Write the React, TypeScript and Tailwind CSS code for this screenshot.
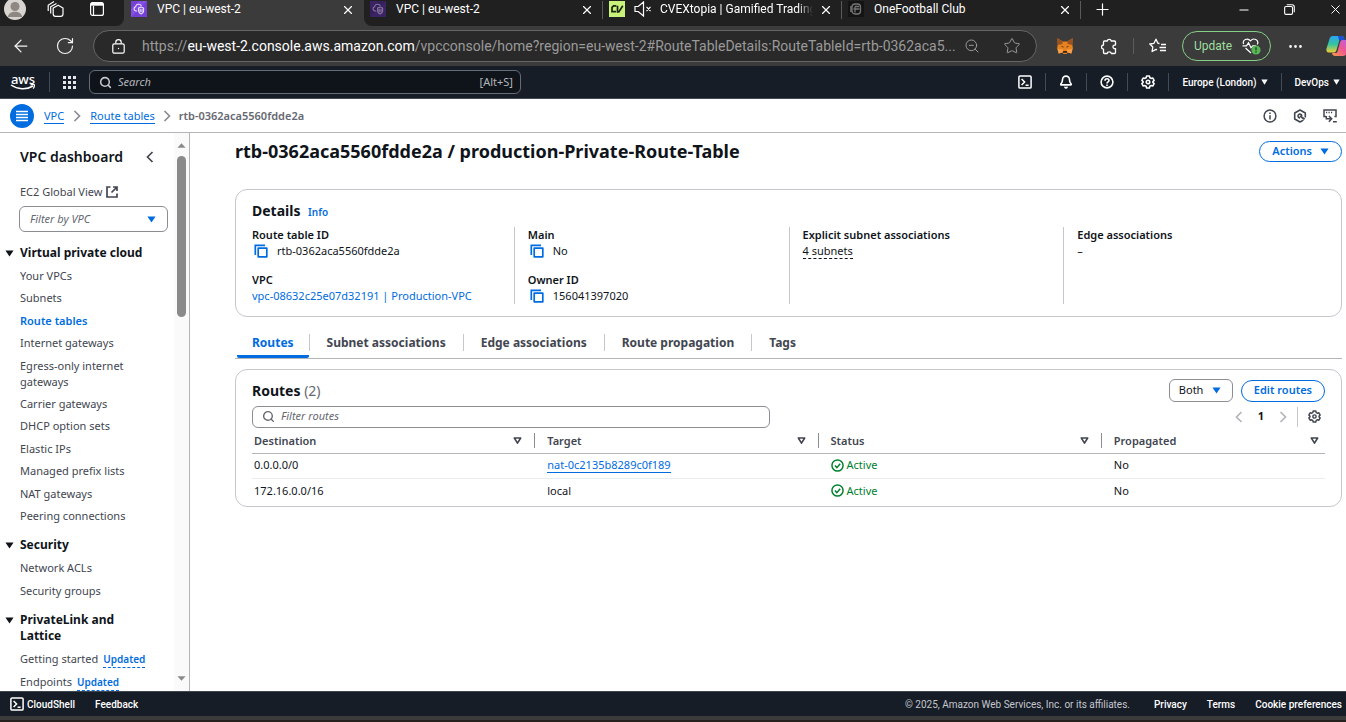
import React from "react";
import {
  ArrowLeft,
  Bell,
  Ellipsis,
  Minus,
  Plus,
  RotateCw,
  Search,
  Star,
  X,
  ZoomOut,
} from "lucide-react";

const chromeFont = "font-[Roboto,'Open_Sans',sans-serif]";
const pageFont = "font-['Noto_Sans','Open_Sans',sans-serif]";

/* ---------- icons ---------- */

function Caret({ className = "" }: { className?: string }) {
  return (
    <svg viewBox="0 0 10 8" preserveAspectRatio="none" className={className} aria-hidden="true">
      <path d="M0.5 0.5h9L5 7.5z" fill="currentColor" />
    </svg>
  );
}

function SortIcon() {
  return (
    <svg viewBox="0 0 9 8" className="h-2 w-[9px]" aria-hidden="true">
      <path d="M1.3 1h6.4L4.5 6.2z" fill="none" stroke="currentColor" strokeWidth="1.6" strokeLinejoin="round" />
    </svg>
  );
}

function Chevron({ className = "", left = false }: { className?: string; left?: boolean }) {
  return (
    <svg viewBox="0 0 8 12" className={className} aria-hidden="true">
      <path d={left ? "M6.5 1L1.5 6l5 5" : "M1.5 1l5 5-5 5"} fill="none" stroke="currentColor" strokeWidth="1.7" />
    </svg>
  );
}

function CopyIcon() {
  return (
    <svg viewBox="0 0 14 14" className="h-[14px] w-[14px]" fill="none" stroke="currentColor" strokeWidth="1.7" aria-hidden="true">
      <path d="M1.3 11V1.3H11" />
      <rect x="4.2" y="4.2" width="8.6" height="8.6" strokeLinejoin="round" />
    </svg>
  );
}

function GearIcon({ className = "" }: { className?: string }) {
  return (
    <svg viewBox="0 0 16 16" className={className} fill="none" stroke="currentColor" strokeWidth="1.8" strokeLinejoin="round" aria-hidden="true">
      <path d="M6.4 1.2h3.2l.5 1.9 1.4.8 1.9-.5L15 6.2 13.600 7.500v1L15 9.800l-1.600 2.800-1.900-.5-1.400.8-.5 1.900H6.400l-.5-1.900-1.400-.8-1.900.5L1 9.800l1.400-1.300v-1L1 6.200l1.600-2.800 1.900.5 1.400-.8z" />
      <circle cx="8" cy="8" r="2" />
    </svg>
  );
}

function ShellIcon() {
  return (
    <svg viewBox="0 0 14 14" className="h-[14px] w-[14px]" fill="none" stroke="currentColor" strokeWidth="1.5" aria-hidden="true">
      <rect x="0.9" y="0.9" width="12.2" height="12.2" rx="1.2" />
      <path d="M3.6 4l3 3-3 3M7.6 10.3h3" />
    </svg>
  );
}

function HelpIcon() {
  return (
    <svg viewBox="0 0 14 14" className="h-[14px] w-[14px]" fill="none" stroke="currentColor" strokeWidth="1.6" aria-hidden="true">
      <circle cx="7" cy="7" r="5.9" />
      <path d="M5 5.7c0-2.6 4-2.4 4-.2C9 7 7 6.8 7 8.5M7 9.6v1.4" />
    </svg>
  );
}

function InfoIcon() {
  return (
    <svg viewBox="0 0 14 14" className="h-[14px] w-[14px]" fill="none" stroke="currentColor" strokeWidth="1.5" aria-hidden="true">
      <circle cx="7" cy="7" r="5.9" />
      <path d="M7 6.2v4.2M7 3.6v1.5" />
    </svg>
  );
}

function HexIcon() {
  return (
    <svg viewBox="0 0 14 14" className="h-[14px] w-[14px]" fill="none" stroke="currentColor" strokeWidth="1.600" strokeLinejoin="round" aria-hidden="true">
      <path d="M12.300 8.600V4L7 1 1.700 4v6L7 13l3.400-1.900" />
      <path d="M8.800 7A1.900 1.900 0 107 8.900" />
      <path d="M7 7l4.600 3.200" strokeWidth="2" />
    </svg>
  );
}

function ScreenIcon() {
  return (
    <svg viewBox="0 0 14 14" className="h-[14px] w-[14px]" fill="none" stroke="currentColor" strokeWidth="1.500" aria-hidden="true">
      <path d="M3 7.600H1V1h12v6.600h-1.600" />
      <path d="M3 3.400h1.200M5.500 3.400h1.200M8 3.400h1.200" />
      <path d="M3.300 7v2.800h4.500M5.900 6.900l2.800 2.900-2.800 2.900M10 12.800h3.800" />
    </svg>
  );
}

function CheckCircle() {
  return (
    <svg viewBox="0 0 14 14" className="h-[13px] w-[13px]" fill="none" stroke="currentColor" strokeWidth="1.6" aria-hidden="true">
      <circle cx="7" cy="7" r="6" />
      <path d="M4.2 7.1l2.1 2.2 3.6-4.2" />
    </svg>
  );
}

function VpcIcon({ dim = false }: { dim?: boolean }) {
  return (
    <svg viewBox="0 0 16 16" className="h-4 w-4 shrink-0" aria-hidden="true">
      <rect width="16" height="16" fill={dim ? "#3b2466" : "#7440d6"} />
      <path d="M0 16L16 0H8L0 8z" fill={dim ? "#35205c" : "#8450e4"} />
      <g fill="none" stroke={dim ? "#8a7a9c" : "#efe4ff"} strokeWidth="1.100">
        <path d="M6.200 10H5A2.200 2.200 0 014.600 5.700 3.100 3.100 0 0110.400 5" />
        <path d="M7.600 7l2.500-1 2.500 1v3c0 1.600-1.300 2.500-2.500 3-1.200-.5-2.500-1.400-2.500-3zM9.200 7.800v3.400M11 7.800v3.400" />
      </g>
    </svg>
  );
}

function AwsLogo() {
  return (
    <span className="flex w-[26px] flex-col items-center" aria-label="AWS">
      <span className="text-[13px] leading-[10px] font-medium text-white">aws</span>
      <svg viewBox="0 0 26 6" className="h-[6px] w-[26px]" fill="none" stroke="#fff" strokeWidth="1.500" aria-hidden="true">
        <path d="M1 1c6.500 4.500 15.500 5 22 1" />
        <path d="M20.500 .8c1.500-.3 3-.3 3.900 0 .2 1-.3 2.700-1.200 3.900" strokeWidth="1.200" />
      </svg>
    </span>
  );
}

function FoxIcon() {
  return (
    <svg viewBox="0 0 16 16" className="h-4 w-4" aria-hidden="true">
      <path d="M0.500 0.300L5.800 3.500h4.400L15.500 .3 15.300 6.500l.6 4-1.500 5-3.800-1L9.500 15.900h-3L5.400 14.500l-3.800 1L.1 10.500l.6-4z" fill="#e8821e" />
      <path d="M.5.3L5.800 3.500 5.300 6 .9 7zM15.500.3l-5.300 3.200.5 2.500 4.400 1z" fill="#9a5220" />
      <path d="M1.600 15.500l3.800-1 .8-3L.8 11zM14.400 15.500l-3.800-1-.8-3 5.400-.5z" fill="#f6a04a" />
      <path d="M3.800 8l2.400.4.300 1.400zM12.200 8l-2.400.4-.3 1.400zM6.200 13h3.600l.3 1.800H5.900z" fill="#33231b" />
    </svg>
  );
}

function CopilotIcon() {
  return (
    <svg viewBox="0 0 24 22" className="h-[22px] w-6 shrink-0" aria-hidden="true">
      <defs>
        <linearGradient id="cpA" x1="0" y1="0" x2="0" y2="1">
          <stop offset="0" stopColor="#2aa4f0" />
          <stop offset="0.500" stopColor="#35c4a0" />
          <stop offset="1" stopColor="#f2cf32" />
        </linearGradient>
        <linearGradient id="cpB" x1="1" y1="0" x2="0" y2="1">
          <stop offset="0" stopColor="#b161f5" />
          <stop offset="0.500" stopColor="#f0568f" />
          <stop offset="1" stopColor="#fb9a4a" />
        </linearGradient>
      </defs>
      <path d="M6.500 1h9c2 0 2.500 1 3 3l-5 1-3 10c-.5 2-1.500 2.500-3 2.500H3c-2.500 0-3-2-2.500-4L3.500 4C4 2 5 1 6.500 1z" fill="url(#cpA)" />
      <path d="M12 1h3.500c2 0 2.500 1 3.200 4H13z" fill="#1b4fd6" />
      <path d="M17.500 21H9c-1.500 0-2.500-.7-3-3h3.500c1 0 1.700-.5 2-1.500L14 7.500C14.500 5.500 15.500 5 17 5h4c2.500 0 3 2 2.500 4L20.500 18c-.5 2-1.500 3-3 3z" fill="url(#cpB)" />
    </svg>
  );
}

/* ---------- browser chrome ---------- */

function TabClose({ label }: { label: string }) {
  return (
    <button aria-label={label} className="mt-[2px] block shrink-0 text-white">
      <X size={14} strokeWidth={2} />
    </button>
  );
}

function TabStrip() {
  return (
    <div className="shrink-0 bg-[#3b3b3b]">
      <div className={`flex h-[26px] text-[12px] leading-[17px] text-white ${chromeFont}`}>
        <div className="flex w-[124px] shrink-0 items-start rounded-br-lg bg-[#202020] pl-1">
          <button aria-label="Profile" className="-mt-[2px] h-[22px] w-[22px] overflow-hidden rounded-full bg-[#d8d4d0]">
            <svg viewBox="0 0 22 22" className="h-[22px] w-[22px]" aria-hidden="true">
              <circle cx="11" cy="8.500" r="4.500" fill="#8e8782" />
              <path d="M4 19c0-7 14-7 14 0z" fill="#8e8782" />
            </svg>
          </button>
          <button aria-label="Workspaces" className="ml-[21px]">
            <svg viewBox="0 0 17 17" className="h-[17px] w-[17px]" fill="none" stroke="#fff" strokeWidth="1.200" strokeLinejoin="round" aria-hidden="true">
              <path d="M6.200 8l5-2.800L16 8v6c0 1.500-.8 2.300-2.300 2.300H8.500c-1.500 0-2.300-.8-2.300-2.300zM3.700 13.500V6.800L9.500 3.400M1.200 11V5.200L7 1.600" />
            </svg>
          </button>
          <button aria-label="Tab actions" className="mt-[2px] ml-[26px]">
            <svg viewBox="0 0 14 14" className="h-[14px] w-[14px]" fill="none" stroke="#fff" strokeWidth="1.200" aria-hidden="true">
              <rect x="0.600" y="0.600" width="12.800" height="12.800" rx="2" />
              <path d="M1 2.200h12" strokeWidth="3" />
              <path d="M3.500 4v9" />
            </svg>
          </button>
        </div>
        <div className="flex w-[240px] shrink-0 items-start pt-px pr-[9px] pl-[7px]">
          <VpcIcon />
          <span className="ml-[10px] flex-1">VPC | eu-west-2</span>
          <TabClose label="Close VPC tab" />
        </div>
        <div className="flex min-w-0 flex-1 rounded-bl-lg bg-[#202020]">
          <div className="flex w-[238px] shrink-0 items-start pt-px pr-[8px] pl-[6px]">
            <VpcIcon dim />
            <span className="ml-[10px] flex-1">VPC | eu-west-2</span>
            <TabClose label="Close second VPC tab" />
          </div>
          <div className="flex w-[239px] shrink-0 items-start pt-px pr-[8px]">
            <span className="h-[18px] w-px shrink-0 bg-[#5a5a5a]" />
            <svg viewBox="0 0 16 16" className="ml-[6px] h-4 w-4 shrink-0" aria-hidden="true">
              <rect width="16" height="16" fill="#c9f27b" />
              <path d="M7.300 4.800H4.600L3 6.300v4.400h4M8.500 4.800v6.100h1.300l4-6.100" fill="none" stroke="#1c2410" strokeWidth="1.700" />
            </svg>
            <svg viewBox="0 0 18 16" className="ml-[9px] h-4 w-[18px] shrink-0" fill="none" stroke="#fff" strokeWidth="1.200" aria-hidden="true">
              <path d="M1 5.500h3.200L9.500 1v14l-5.300-4.500H1zM12.500 5.800l4 4.400M16.500 5.800l-4 4.400" />
            </svg>
            <span className="ml-[8px] min-w-0 flex-1 whitespace-nowrap [mask-image:linear-gradient(to_right,#000_90%,transparent)]">
              CVEXtopia | Gamified Trading
            </span>
            <div className="ml-[6px]"><TabClose label="Close CVEXtopia tab" /></div>
          </div>
          <div className="flex w-[239px] shrink-0 items-start pt-px pr-[8px]">
            <span className="h-[18px] w-px shrink-0 bg-[#5a5a5a]" />
            <svg viewBox="0 0 16 16" className="ml-[6px] h-4 w-4 shrink-0" aria-hidden="true">
              <rect width="16" height="16" fill="#141414" />
              <g fill="none" stroke="#757575" strokeWidth="1.300">
                <rect x="4" y="3" width="8.500" height="10" rx="3" />
                <path d="M5.500 8h6M7 5.500h4M7 5.500v6M2 6h2M2 8h2M2 10h2" />
              </g>
            </svg>
            <span className="ml-[10px] flex-1">OneFootball Club</span>
            <TabClose label="Close OneFootball tab" />
          </div>
          <div className="flex flex-1 items-start pt-px pr-[3px]">
            <span className="h-[18px] w-px shrink-0 bg-[#5a5a5a]" />
            <button aria-label="New tab" className="-mt-px ml-[12px]"><Plus size={19} strokeWidth={1.500} /></button>
            <div className="mt-px ml-auto flex items-center gap-[33px]">
              <button aria-label="Minimize"><Minus size={14} strokeWidth={2} /></button>
              <button aria-label="Restore">
                <svg viewBox="0 0 12 12" className="h-[11px] w-[11px]" fill="none" stroke="#fff" strokeWidth="1.200" aria-hidden="true">
                  <rect x="0.700" y="2.700" width="8.600" height="8.600" rx="1.500" />
                  <path d="M3 .8h5.800c1.300 0 2.400 1.100 2.400 2.400V9" />
                </svg>
              </button>
              <button aria-label="Close window"><X size={15} strokeWidth={1.600} /></button>
            </div>
          </div>
        </div>
      </div>
    </div>
  );
}

function AddressBar() {
  return (
    <div className={`flex h-10 shrink-0 items-center overflow-hidden bg-[#3b3b3b] text-gray-100 ${chromeFont}`}>
      <button aria-label="Back" className="ml-[11px]"><ArrowLeft size={20} strokeWidth={1.500} /></button>
      <button aria-label="Reload" className="ml-[24px]"><RotateCw size={20} strokeWidth={1.400} /></button>
      <div className="ml-[18px] flex h-8 min-w-0 flex-1 items-center rounded-full border border-[#666] bg-[#292929] pr-[15px] pl-[18px]">
        <svg viewBox="0 0 13 15" className="h-[15px] w-[13px] shrink-0" fill="none" stroke="#fff" strokeWidth="1.200" aria-hidden="true">
          <rect x="0.800" y="4.800" width="11.400" height="9.400" rx="1.500" />
          <path d="M3.800 4.500V3.300a2.700 2.700 0 015.400 0v1.200" />
          <circle cx="6.500" cy="9.500" r="0.700" fill="#fff" stroke="none" />
        </svg>
        <p className="ml-[17px] min-w-0 flex-1 text-[14px] whitespace-nowrap text-[#9a9a9a]">
          https://<span className="text-white">eu-west-2.console.aws.amazon.com</span>
          /vpcconsole/home?region=eu-west-2#RouteTableDetails:RouteTableId=rtb-0362aca5...
        </p>
        <button aria-label="Zoom out" className="ml-[4px] text-[#9a9a9a]"><ZoomOut size={16} strokeWidth={1.500} /></button>
        <button aria-label="Add to favorites" className="ml-[23px] text-[#9a9a9a]"><Star size={18} strokeWidth={1.300} /></button>
      </div>
      <button aria-label="Wallet" className="ml-[20px]"><FoxIcon /></button>
      <button aria-label="Extensions" className="ml-[28px]">
        <svg viewBox="0 0 17 17" className="h-[17px] w-[17px]" fill="none" stroke="#fff" strokeWidth="1.300" strokeLinejoin="round" aria-hidden="true">
          <path d="M3.500 3h2.700a2.100 2.100 0 014.100 0h3.200c.6 0 1 .4 1 1v3c-3.400-.4-3.400 4.100 0 3.700V14.500c0 .6-.4 1-1 1h-3.200c-.2-2.300-3.900-2.300-4.100 0H3.500c-.6 0-1-.4-1-1v-3.400C-.2 11 -.2 7.100 2.500 7V4c0-.6.4-1 1-1z" />
        </svg>
      </button>
      <span className="ml-[15px] h-4 w-px bg-[#5c5c5c]" />
      <button aria-label="Favorites" className="ml-[15px]">
        <svg viewBox="0 0 18 16" className="h-4 w-[18px]" fill="none" stroke="#fff" strokeWidth="1.300" strokeLinejoin="round" aria-hidden="true">
          <path d="M10.500 5.500L8.900 5.300 7 1.200 5 5.300l-4.200.7L3.800 9l-.7 4.500L7 11.400l1 .5M12 6.500h5M10.500 9.500H17M11 12.500h6" />
        </svg>
      </button>
      <button className="ml-[15px] flex h-[30px] w-[89px] items-center justify-between rounded-full border border-[#86cf86] pr-[9px] pl-[11px] text-[12px] text-[#9fdf9f]">
        Update
        <svg viewBox="0 0 19 17" className="h-[17px] w-[19px]" fill="none" aria-hidden="true">
          <path d="M1.600 6C0 1.800 5.500-.8 8.500 2.800 11.500-.8 17.500 1.800 15.300 6.500M3.500 10l5.500 5" stroke="#fff" strokeWidth="1.200" />
          <path d="M.5 7.800h4l2-3 2.500 5 1.800-2H14" stroke="#fff" strokeWidth="1.200" />
          <circle cx="14" cy="12" r="4.600" fill="#58b558" />
          <path d="M14 9.300v3M14 13.300v1.200" stroke="#173d17" strokeWidth="1.300" />
        </svg>
      </button>
      <button aria-label="Settings and more" className="ml-[16px]"><Ellipsis size={17} /></button>
      <button aria-label="Copilot" className="-mr-[4px] ml-[22px]"><CopilotIcon /></button>
    </div>
  );
}

/* ---------- console header ---------- */

const NavRule = () => <span className="h-[18px] w-px bg-[#424a57]" />;

function ConsoleNav() {
  return (
    <header className="flex h-[33px] shrink-0 items-center border-b border-[#424650] bg-[#161d27] text-[#e4e6ea]">
      <a href="#home" className="ml-[10px]"><AwsLogo /></a>
      <span className="ml-[13px] h-5 w-px bg-[#424a57]" />
      <button aria-label="Services" className="ml-[13px]">
        <svg viewBox="0 0 13 13" className="h-[13px] w-[13px]" fill="currentColor" aria-hidden="true">
          {[0, 5, 10].map((y) => [0, 5, 10].map((x) => <rect key={`${x}-${y}`} x={x} y={y} width="3" height="3" />))}
        </svg>
      </button>
      <label className="ml-[13px] flex h-6 w-[432px] items-center rounded-md border border-[#656c78] bg-[#0f141a] pr-[7px] pl-[9px]">
        <Search size={13} strokeWidth={2.800} className="shrink-0 text-[#c6c6cd]" />
        <input aria-label="Search" placeholder="Search" className="ml-[6px] min-w-0 flex-1 bg-transparent text-[11px] outline-none placeholder:text-[#b4b4bb] placeholder:italic" />
        <span className="text-[11px] text-[#b4b4bb]">[Alt+S]</span>
      </label>
      <div className={`mr-[6px] ml-auto flex items-center gap-[13px] text-[10px] text-white ${chromeFont}`}>
        <button aria-label="CloudShell"><ShellIcon /></button>
        <NavRule />
        <button aria-label="Notifications"><Bell size={14} strokeWidth={2.800} /></button>
        <NavRule />
        <button aria-label="Help"><HelpIcon /></button>
        <NavRule />
        <button aria-label="Settings"><GearIcon className="h-[14px] w-[14px]" /></button>
        <NavRule />
        <button className="flex items-center gap-[4px] font-medium">Europe (London)<Caret className="h-[6px] w-[7px]" /></button>
        <NavRule />
        <button className="flex items-center gap-[4px] font-medium">DevOps<Caret className="h-[6px] w-[7px]" /></button>
      </div>
    </header>
  );
}

function Breadcrumbs() {
  return (
    <div className="flex h-[34px] shrink-0 items-center border-b border-[#b4b4bb] bg-white pl-[10px] text-[11px] leading-[15px]">
      <button aria-label="Toggle navigation" className="flex h-6 w-6 items-center justify-center rounded-full bg-[#006ce0]">
        <svg viewBox="0 0 12 12" className="h-3 w-3" stroke="#fff" strokeWidth="1.500" aria-hidden="true">
          <path d="M0 1.500h12M0 4.500h12M0 7.500h12M0 10.500h12" />
        </svg>
      </button>
      <nav aria-label="Breadcrumb" className="flex items-center text-[#006ce0]">
        <a href="#vpc" className="ml-[10px] border-b border-[#006ce0]">VPC</a>
        <Chevron className="mx-[9px] h-[12px] w-[8px] text-[#8c8c94]" />
        <a href="#route-tables" className="border-b border-[#006ce0]">Route tables</a>
        <Chevron className="mx-[8px] h-[12px] w-[8px] text-[#8c8c94]" />
        <span className="font-semibold text-[#656871]">rtb-0362aca5560fdde2a</span>
      </nav>
      <div className="mr-[9px] ml-auto flex gap-4 text-[#424650]">
        <button aria-label="Info"><InfoIcon /></button>
        <button aria-label="Diagnostics"><HexIcon /></button>
        <button aria-label="Open panel"><ScreenIcon /></button>
      </div>
    </div>
  );
}

/* ---------- side navigation ---------- */

type NavItem = { label: string; active?: boolean; updated?: boolean };

const vpcItems: NavItem[] = [
  { label: "Your VPCs" },
  { label: "Subnets" },
  { label: "Route tables", active: true },
  { label: "Internet gateways" },
  { label: "Egress-only internet gateways" },
  { label: "Carrier gateways" },
  { label: "DHCP option sets" },
  { label: "Elastic IPs" },
  { label: "Managed prefix lists" },
  { label: "NAT gateways" },
  { label: "Peering connections" },
];

function NavSection({ title, items, listClass }: { title: string; items: NavItem[]; listClass: string }) {
  return (
    <section className="mb-[13px] w-[150px]">
      <h3 className="text-[12px] leading-4 font-bold text-[#0f141a]">
        <button className="flex items-start text-left">
          <Caret className="mt-[5px] mr-[6px] ml-[5px] h-[7px] w-[9px] shrink-0" />
          <span>{title}</span>
        </button>
      </h3>
      <ul className={`mt-[7px] ml-5 flex flex-col ${listClass}`}>
        {items.map((item) => (
          <li key={item.label} className={item.updated ? "leading-4 whitespace-nowrap" : "leading-4"}>
            <a href="#nav" className={item.active ? "font-semibold text-[#006ce0]" : "text-[#424650]"}>{item.label}</a>
            {item.updated && (
              <a href="#updated" className="ml-[5px] border-b border-dashed border-[#006ce0] pb-px text-[10px] font-semibold text-[#006ce0]">
                Updated
              </a>
            )}
          </li>
        ))}
      </ul>
    </section>
  );
}

function Sidebar() {
  return (
    <aside className="flex w-[190px] shrink-0 overflow-hidden border-r border-[#b4b4bb] text-[11px]">
      <div className="min-w-0 flex-1">
        <div className="mt-[15px] mr-5 ml-5 flex items-center justify-between">
          <h2 className="text-[14px] leading-[18px] font-semibold whitespace-nowrap text-[#0f141a]">VPC dashboard</h2>
          <button aria-label="Collapse navigation" className="text-[#424650]"><Chevron left className="h-[12px] w-[8px]" /></button>
        </div>
        <a href="#ec2" className="mt-[18px] ml-5 flex items-center gap-[4px] leading-4 text-[#424650]">
          EC2 Global View
          <svg viewBox="0 0 12 12" className="h-3 w-3" fill="none" stroke="currentColor" strokeWidth="1.700" aria-hidden="true">
            <path d="M4.500 1H1v10h10V7.500M7 1h4v4M11 1L5.500 6.500" />
          </svg>
        </a>
        <label className="relative mt-[6px] ml-[19px] block w-[149px]">
          <select aria-label="Filter by VPC" className="block h-[26px] w-full appearance-none rounded-md border border-[#8c8c94] bg-white pl-[10px] text-[11px] text-[#656871] italic">
            <option>Filter by VPC</option>
          </select>
          <Caret className="pointer-events-none absolute top-[10px] right-[12px] h-[7px] w-[9px] text-[#006ce0]" />
        </label>
        <nav aria-label="VPC" className="mt-[13px]">
          <NavSection title="Virtual private cloud" items={vpcItems} listClass="h-64 justify-between" />
          <NavSection title="Security" items={[{ label: "Network ACLs" }, { label: "Security groups" }]} listClass="gap-[7px]" />
          <NavSection
            title="PrivateLink and Lattice"
            items={[{ label: "Getting started", updated: true }, { label: "Endpoints", updated: true }]}
            listClass="gap-[7px]"
          />
        </nav>
      </div>
      <div className="flex w-[15px] flex-col items-center bg-[#fafafa] py-[10px]" aria-hidden="true">
        <Caret className="h-[5px] w-[9px] shrink-0 rotate-180 text-[#8a8a8a]" />
        <span className="mt-[8px] h-[161px] w-[9px] rounded-full bg-[#8a8a8a]" />
        <Caret className="mt-auto h-[5px] w-[9px] shrink-0 text-[#8a8a8a]" />
      </div>
    </aside>
  );
}

/* ---------- details ---------- */

function Field({ label, copy = false, children }: { label: string; copy?: boolean; children: React.ReactNode }) {
  return (
    <div>
      <dt className="font-semibold">{label}</dt>
      <dd className="flex items-center">
        {copy && (
          <button aria-label={`Copy ${label}`} className="mr-[9px] ml-[2px] text-[#006ce0]"><CopyIcon /></button>
        )}
        {children}
      </dd>
    </div>
  );
}

const detailCol = "flex flex-col gap-[13px]";
const ruledCol = "-ml-[13px] border-l border-[#c6c6cd] pl-[13px]";

function DetailsCard() {
  return (
    <section className="mt-[27px] rounded-xl border border-[#c6c6cd] px-4 pt-[12px] pb-[12px]">
      <h2 className="h-[18px] text-[14px] leading-[18px] font-bold">
        Details <a href="#info" className="ml-[4px] text-[10px] font-semibold text-[#006ce0]">Info</a>
      </h2>
      <dl className="mt-[7px] grid grid-cols-4 gap-x-[26px] leading-4">
        <div className={detailCol}>
          <Field label="Route table ID" copy>rtb-0362aca5560fdde2a</Field>
          <Field label="VPC"><a href="#vpc" className="text-[#006ce0]">vpc-08632c25e07d32191 | Production-VPC</a></Field>
        </div>
        <div className={`${detailCol} ${ruledCol}`}>
          <Field label="Main" copy>No</Field>
          <Field label="Owner ID" copy>156041397020</Field>
        </div>
        <div className={`${detailCol} ${ruledCol}`}>
          <Field label="Explicit subnet associations"><a href="#subnets" className="border-b border-dashed border-[#0f141a] leading-[15px]">4 subnets</a></Field>
        </div>
        <div className={`${detailCol} ${ruledCol}`}>
          <Field label="Edge associations">–</Field>
        </div>
      </dl>
    </section>
  );
}

/* ---------- tabs and routes ---------- */

const tabs = ["Routes", "Subnet associations", "Edge associations", "Route propagation", "Tags"];

function Tabs() {
  return (
    <div role="tablist" className="mt-[11px] flex h-[31px] border-b border-[#b4b4bb] pl-[2px] text-[12px] leading-4 font-bold text-[#424650]">
      {tabs.map((tab, i) => (
        <div key={tab} className="flex">
          <button
            role="tab"
            aria-selected={i === 0}
            className={i === 0 ? "rounded-b-xs border-b-3 border-[#006ce0] pt-[2px] pr-[15px] pl-[15px] text-[#006ce0]" : "border-b-3 border-transparent px-[17px] pt-[2px]"}
          >
            {tab}
          </button>
          {i < tabs.length - 1 && <span className="mt-[6px] h-[17px] w-px bg-[#c6c6cd]" />}
        </div>
      ))}
    </div>
  );
}

const routes = [
  { destination: "0.0.0.0/0", target: "nat-0c2135b8289c0f189", link: true },
  { destination: "172.16.0.0/16", target: "local", link: false },
];

function RoutesTable() {
  const heads = ["Destination", "Target", "Status", "Propagated"];
  return (
    <table className="w-full table-fixed border-collapse text-left">
      <colgroup>
        <col className="w-[26.4%]" />
        <col className="w-[26.4%]" />
        <col className="w-[26.4%]" />
        <col />
      </colgroup>
      <thead>
        <tr className="h-[25px] border-b border-[#b4b4bb] text-[#424650]">
          {heads.map((head, i) => (
            <th key={head} scope="col" className="p-0 pt-px font-semibold">
              <div className={`flex h-[15px] items-center justify-between ${i === 0 ? "pl-[2px]" : "pl-[12px]"} ${i < 3 ? "border-r border-[#8c8c94] pr-[12px]" : "pr-[6px]"}`}>
                {head}
                <button aria-label={`Sort by ${head}`}><SortIcon /></button>
              </div>
            </th>
          ))}
        </tr>
      </thead>
      <tbody>
        {routes.map((route) => (
          <tr key={route.destination} className="h-[25px] border-b border-[#ebebf0] last:border-0">
            <td className="p-0 pl-[2px]">{route.destination}</td>
            <td className="p-0 pl-[12px]">
              {route.link ? <a href="#nat" className="inline-block border-b border-[#006ce0] leading-[15px] text-[#006ce0]">{route.target}</a> : route.target}
            </td>
            <td className="p-0 pl-[12px]">
              <span className="flex items-center gap-[3px] text-[#00802f]"><CheckCircle />Active</span>
            </td>
            <td className="p-0 pl-[12px]">No</td>
          </tr>
        ))}
      </tbody>
    </table>
  );
}

function RoutesCard() {
  return (
    <section className="mt-[10px] rounded-xl border border-[#c6c6cd] px-4 pt-[9px] pb-[3px]">
      <div className="flex h-[23px] items-center">
        <h2 className="text-[14px] leading-[18px] font-bold">Routes <span className="font-normal text-[#656871]">(2)</span></h2>
        <label className="relative ml-auto">
          <select aria-label="Route type" className="block h-[23px] w-16 appearance-none rounded-md border border-[#8c8c94] bg-white pl-[9px] text-[11px]">
            <option>Both</option>
          </select>
          <Caret className="pointer-events-none absolute top-[8px] right-[12px] h-[7px] w-[9px] text-[#006ce0]" />
        </label>
        <button className="ml-[8px] h-[22px] rounded-full border border-[#006ce0] px-[12px] font-semibold text-[#006ce0]">Edit routes</button>
      </div>
      <div className="mt-[3px] flex h-[23px] items-center">
        <label className="flex h-[22px] w-[518px] items-center rounded-md border border-[#8c8c94] px-[9px]">
          <Search size={13} strokeWidth={2.600} className="shrink-0 text-[#656871]" />
          <input aria-label="Filter routes" placeholder="Filter routes" className="ml-[6px] min-w-0 flex-1 bg-transparent outline-none placeholder:text-[#656871] placeholder:italic" />
        </label>
        <div className="ml-auto flex items-center text-[#b4b4bb]">
          <button aria-label="Previous page"><Chevron left className="h-[12px] w-[8px]" /></button>
          <span className="mx-[15px] font-bold text-[#0f141a]">1</span>
          <button aria-label="Next page"><Chevron className="h-[12px] w-[8px]" /></button>
          <span className="mx-[10px] h-5 w-px bg-[#c6c6cd]" />
          <button aria-label="Preferences" className="mr-[4px] text-[#424650]"><GearIcon className="h-[13px] w-[13px]" /></button>
        </div>
      </div>
      <RoutesTable />
    </section>
  );
}

/* ---------- page ---------- */

export default function App() {
  return (
    <div className="flex h-screen flex-col overflow-hidden bg-white">
      <TabStrip />
      <AddressBar />
      <div className={`flex min-h-0 flex-1 flex-col text-[11px] text-[#0f141a] ${pageFont}`}>
        <ConsoleNav />
        <Breadcrumbs />
        <div className="flex min-h-0 flex-1">
          <Sidebar />
          <main className="min-w-0 flex-1 overflow-hidden pt-[7px] pr-[4px] pl-[45px]">
            <div className="flex h-[22px] items-center justify-between">
              <h1 className="text-[18px] leading-[22px] font-bold">rtb-0362aca5560fdde2a / production-Private-Route-Table</h1>
              <button className="flex h-[21px] items-center gap-[8px] rounded-full border border-[#006ce0] px-[12px] font-semibold text-[#006ce0]">
                Actions <Caret className="h-[7px] w-[9px]" />
              </button>
            </div>
            <DetailsCard />
            <Tabs />
            <RoutesCard />
          </main>
        </div>
        <footer className={`flex h-[25px] shrink-0 items-center border-t border-[#424650] bg-[#161d27] px-[4px] text-[10px] text-white ${chromeFont}`}>
          <button className="ml-[6px] flex items-center gap-[3px] font-medium"><ShellIcon />CloudShell</button>
          <a href="#feedback" className="ml-[20px] font-medium">Feedback</a>
          <span className="mr-[24px] ml-auto text-[#c6c6cd]">© 2025, Amazon Web Services, Inc. or its affiliates.</span>
          <a href="#privacy" className="font-medium">Privacy</a>
          <a href="#terms" className="mx-[20px] font-medium">Terms</a>
          <a href="#cookies" className="font-medium">Cookie preferences</a>
        </footer>
      </div>
      <div className="flex h-[6px] shrink-0 flex-col bg-[#3b3b3b] pt-[4px]">
        <div className="h-[2px] bg-[#24211f]" />
      </div>
    </div>
  );
}
